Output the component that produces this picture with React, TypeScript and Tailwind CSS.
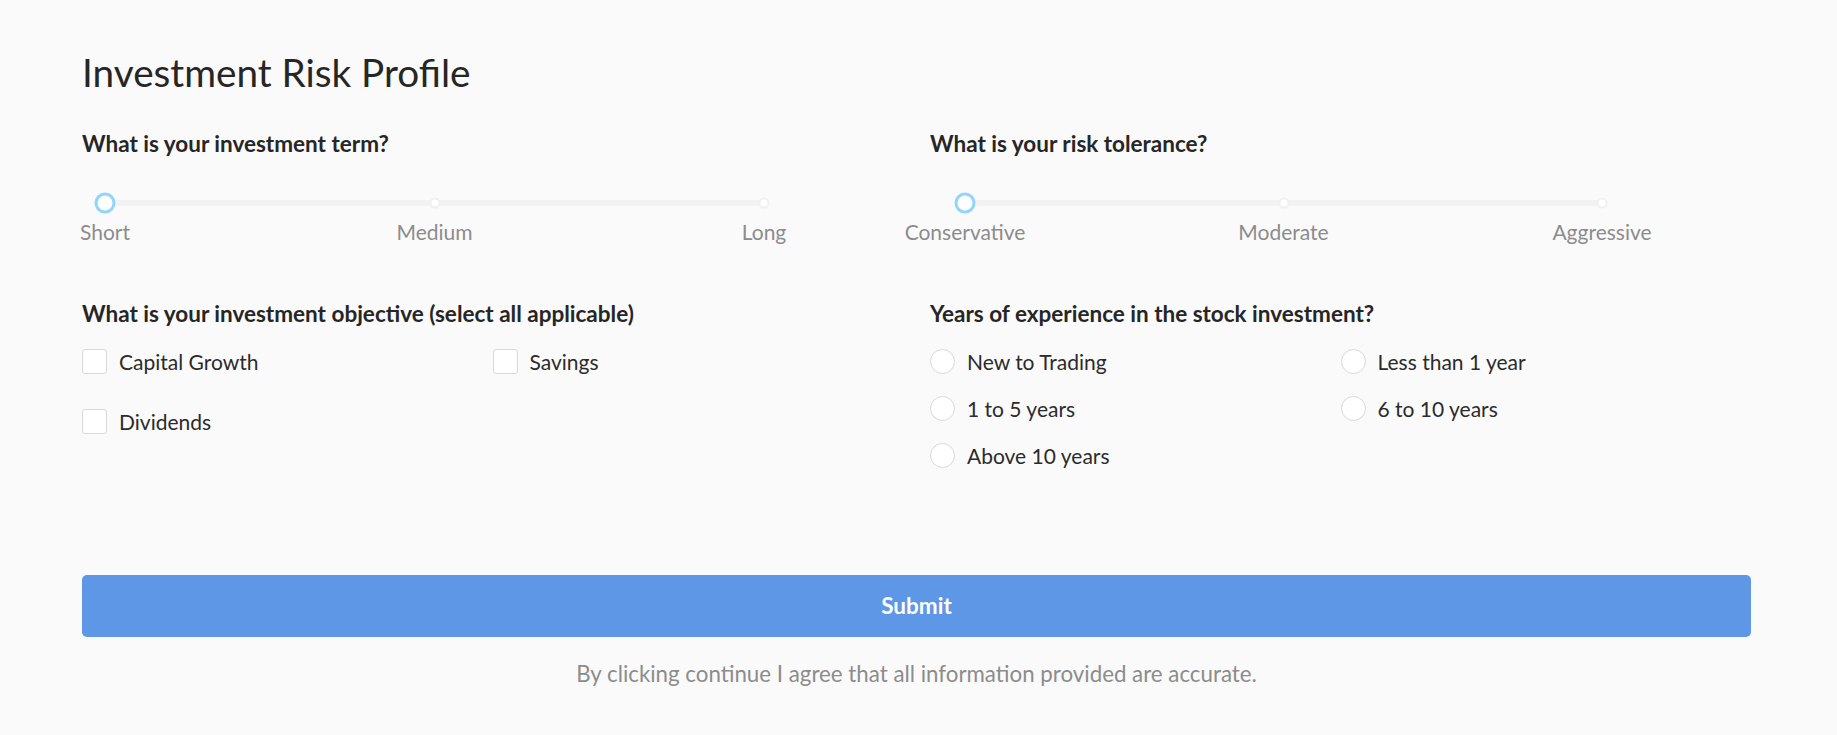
import React from 'react';

type SliderProps = {
  marks: string[];
  className: string;
};

const MarkSlider: React.FC<SliderProps> = ({ marks, className }) => {
  const positions = ['left-0', 'left-1/2', 'left-full'];

  return (
    <div className={className}>
      <div className="relative h-[24px]">
        <div className="absolute inset-x-0 top-1/2 h-[6px] -translate-y-1/2 rounded-full bg-[#f2f2f2]" />
        {marks.map((m, i) => (
          <span
            key={m}
            className={`absolute top-1/2 h-[11px] w-[11px] -translate-x-1/2 -translate-y-1/2 rounded-full border-[2px] border-[#f0f0f0] bg-white ${positions[i]}`}
          />
        ))}
        <span className="absolute left-0 top-1/2 h-[21px] w-[21px] -translate-x-1/2 -translate-y-1/2 rounded-full border-[3px] border-[#91d5ff] bg-white" />
      </div>
      <div className="relative mt-[5px] h-[24px]">
        {marks.map((m, i) => (
          <span
            key={m}
            className={`absolute top-0 -translate-x-1/2 whitespace-nowrap text-[21px] leading-[24px] text-[#8c8c8c] ${positions[i]}`}
          >
            {m}
          </span>
        ))}
      </div>
    </div>
  );
};

const Checkbox: React.FC<{ label: string }> = ({ label }) => (
  <label className="flex h-[25px] items-center">
    <span className="h-[25px] w-[25px] shrink-0 rounded-[3px] border-[1.5px] border-[#d9d9d9] bg-white" />
    <span className="ml-3 text-[21px] leading-[24px] text-[#2b2b2b]">{label}</span>
  </label>
);

const Radio: React.FC<{ label: string }> = ({ label }) => (
  <label className="flex h-[25px] items-center">
    <span className="h-[25px] w-[25px] shrink-0 rounded-full border-[1.5px] border-[#d9d9d9] bg-white" />
    <span className="ml-3 text-[21px] leading-[24px] text-[#2b2b2b]">{label}</span>
  </label>
);

export default function App() {
  return (
    <div className="min-h-screen bg-[#fafafa] pl-[82px] pr-[86px] pt-[49px] font-['Lato',sans-serif] text-[#262626]">
      <h1 className="text-[38.7px] font-normal leading-[46px] text-[#262626]">Investment Risk Profile</h1>

      <div className="mt-[36px] grid grid-cols-2 gap-x-[27px]">
        <div>
          <h3 className="text-[22.5px] font-bold leading-[26px]">What is your investment term?</h3>
          <MarkSlider marks={['Short', 'Medium', 'Long']} className="ml-[23px] mt-[34px] w-[659px]" />
        </div>
        <div>
          <h3 className="text-[22.5px] font-bold leading-[26px]">What is your risk tolerance?</h3>
          <MarkSlider
            marks={['Conservative', 'Moderate', 'Aggressive']}
            className="ml-[35px] mt-[34px] w-[637px]"
          />
        </div>

        <div className="mt-[57px]">
          <h3 className="text-[22.5px] font-bold leading-[26px]">What is your investment objective (select all applicable)</h3>
          <div className="mt-[22px] grid grid-cols-2 gap-y-[35px]">
            <Checkbox label="Capital Growth" />
            <Checkbox label="Savings" />
            <Checkbox label="Dividends" />
          </div>
        </div>
        <div className="mt-[57px]">
          <h3 className="text-[22.5px] font-bold leading-[26px]">Years of experience in the stock investment?</h3>
          <div className="mt-[22px] grid grid-cols-2 gap-y-[22px]">
            <Radio label="New to Trading" />
            <Radio label="Less than 1 year" />
            <Radio label="1 to 5 years" />
            <Radio label="6 to 10 years" />
            <Radio label="Above 10 years" />
          </div>
        </div>
      </div>

      <button className="mt-[107px] flex h-[62px] w-full items-center justify-center rounded-[5px] bg-[#5d97e6] text-[22.5px] font-bold text-white">
        Submit
      </button>
      <p className="mt-[24px] text-center text-[22.3px] leading-[26px] text-[#8c8c8c]">
        By clicking continue I agree that all information provided are accurate.
      </p>
    </div>
  );
}
